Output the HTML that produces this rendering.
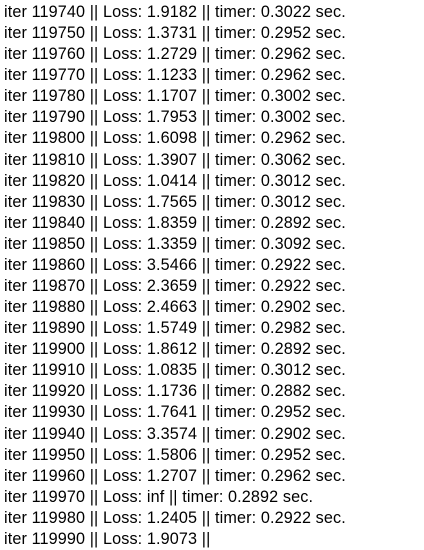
<!DOCTYPE html>
<html><head><meta charset="utf-8"><style>
html,body{margin:0;padding:0;background:#fff;width:424px;height:550px;overflow:hidden}
.w{position:absolute;left:4px;top:2px;font-family:"Liberation Sans",sans-serif;font-size:16.2px;letter-spacing:0.12px;line-height:21.08px;color:#000;white-space:pre}
</style></head><body><div class="w">iter 119740 || Loss: 1.9182 || timer: 0.3022 sec.
iter 119750 || Loss: 1.3731 || timer: 0.2952 sec.
iter 119760 || Loss: 1.2729 || timer: 0.2962 sec.
iter 119770 || Loss: 1.1233 || timer: 0.2962 sec.
iter 119780 || Loss: 1.1707 || timer: 0.3002 sec.
iter 119790 || Loss: 1.7953 || timer: 0.3002 sec.
iter 119800 || Loss: 1.6098 || timer: 0.2962 sec.
iter 119810 || Loss: 1.3907 || timer: 0.3062 sec.
iter 119820 || Loss: 1.0414 || timer: 0.3012 sec.
iter 119830 || Loss: 1.7565 || timer: 0.3012 sec.
iter 119840 || Loss: 1.8359 || timer: 0.2892 sec.
iter 119850 || Loss: 1.3359 || timer: 0.3092 sec.
iter 119860 || Loss: 3.5466 || timer: 0.2922 sec.
iter 119870 || Loss: 2.3659 || timer: 0.2922 sec.
iter 119880 || Loss: 2.4663 || timer: 0.2902 sec.
iter 119890 || Loss: 1.5749 || timer: 0.2982 sec.
iter 119900 || Loss: 1.8612 || timer: 0.2892 sec.
iter 119910 || Loss: 1.0835 || timer: 0.3012 sec.
iter 119920 || Loss: 1.1736 || timer: 0.2882 sec.
iter 119930 || Loss: 1.7641 || timer: 0.2952 sec.
iter 119940 || Loss: 3.3574 || timer: 0.2902 sec.
iter 119950 || Loss: 1.5806 || timer: 0.2952 sec.
iter 119960 || Loss: 1.2707 || timer: 0.2962 sec.
iter 119970 || Loss: inf || timer: 0.2892 sec.
iter 119980 || Loss: 1.2405 || timer: 0.2922 sec.
iter 119990 || Loss: 1.9073 ||</div></body></html>
